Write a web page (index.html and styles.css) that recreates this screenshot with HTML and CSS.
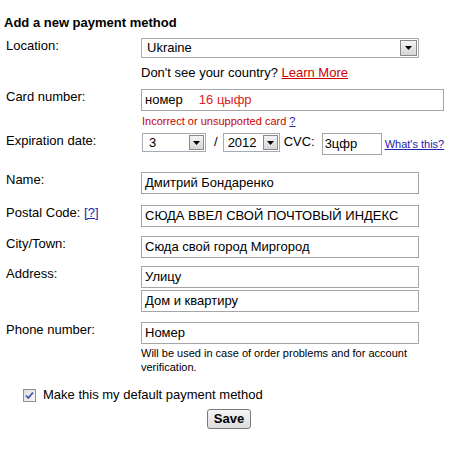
FILE: index.html
```html
<!DOCTYPE html>
<html>
<head>
<meta charset="utf-8">
<link rel="stylesheet" href="styles.css">
</head>
<body>
<div class="form">
  <h1 class="title">Add a new payment method</h1>

  <div class="row row-location">
    <div class="label">Location:</div>
    <div class="field">
      <div class="select select-country"><span class="select-value">Ukraine</span><span class="select-btn"><svg width="7" height="4" viewBox="0 0 7 4"><path d="M0 0H7L3.5 4Z" fill="#000"/></svg></span></div>
      <div class="country-hint">Don't see your country? <a class="link-red" href="#">Learn More</a></div>
    </div>
  </div>

  <div class="row row-card">
    <div class="label">Card number:</div>
    <div class="field">
      <div class="input input-card"><span>номер</span><span class="red-note">16 цыфр</span></div>
      <div class="error">Incorrect or unsupported card <a class="link-blue" href="#">?</a></div>
    </div>
  </div>

  <div class="row row-exp">
    <div class="label">Expiration date:</div>
    <div class="field exp-field">
      <div class="select select-month"><span class="select-value">3</span><span class="select-btn"><svg width="7" height="4" viewBox="0 0 7 4"><path d="M0 0H7L3.5 4Z" fill="#000"/></svg></span></div>
      <span class="slash">/</span>
      <div class="select select-year"><span class="select-value">2012</span><span class="select-btn"><svg width="7" height="4" viewBox="0 0 7 4"><path d="M0 0H7L3.5 4Z" fill="#000"/></svg></span></div>
      <span class="cvc-label">CVC:</span>
      <div class="input input-cvc">3цфр</div>
      <a class="link-blue whats" href="#">What's this?</a>
    </div>
  </div>

  <div class="row row-name">
    <div class="label">Name:</div>
    <div class="field"><div class="input">Дмитрий Бондаренко</div></div>
  </div>

  <div class="row row-postal">
    <div class="label">Postal Code: <a class="link-blue" href="#">[?]</a></div>
    <div class="field"><div class="input">СЮДА ВВЕЛ СВОЙ ПОЧТОВЫЙ ИНДЕКС</div></div>
  </div>

  <div class="row row-city">
    <div class="label">City/Town:</div>
    <div class="field"><div class="input">Сюда свой город Миргород</div></div>
  </div>

  <div class="row row-address">
    <div class="label">Address:</div>
    <div class="field address-field">
      <div class="input">Улицу</div>
      <div class="input">Дом и квартиру</div>
    </div>
  </div>

  <div class="row row-phone">
    <div class="label">Phone number:</div>
    <div class="field">
      <div class="input">Номер</div>
      <div class="phone-hint">Will be used in case of order problems and for account verification.</div>
    </div>
  </div>

  <div class="default-row">
    <span class="checkbox"><svg width="9" height="9" viewBox="0 0 9 9"><path d="M1 4.5L3.3 7L8 1.5" fill="none" stroke="#3e55a6" stroke-width="1.8"/></svg></span>
    <span>Make this my default payment method</span>
  </div>

  <div class="save-row">
    <button class="save-btn" type="button">Save</button>
  </div>
</div>
</body>
</html>
```

FILE: styles.css
```css
* { box-sizing: border-box; }

html, body {
  margin: 0;
  padding: 0;
  background: #fff;
}

body {
  font-family: "Liberation Sans", Arial, sans-serif;
  font-size: 13px;
  line-height: 16px;
  color: #000;
}

.form {
  width: 462px;
  padding-left: 6px;
}

.title {
  margin: 15px 0 0 -2px;
  font-size: 13px;
  line-height: 16px;
  font-weight: bold;
}

.row {
  display: flex;
  align-items: flex-start;
}

.label {
  width: 135px;
  flex: none;
}

.field {
  display: flex;
  flex-direction: column;
}

.row-location { margin-top: 7px; }
.row-card { margin-top: 8px; }
.row-exp { margin-top: 5px; }
.row-name { margin-top: 17px; }
.row-postal { margin-top: 11px; }
.row-city { margin-top: 9px; }
.row-address { margin-top: 8px; }
.row-phone { margin-top: 10px; }

.select {
  display: flex;
  align-items: center;
  background: #fff;
  border: 1px solid #a5acb5;
  height: 20px;
  padding: 1px;
}

.select-value {
  flex: 1;
  padding-left: 4px;
  white-space: nowrap;
}

.select-btn {
  width: 17px;
  height: 16px;
  flex: none;
  display: flex;
  align-items: center;
  justify-content: center;
  border: 1px solid #8a8a8a;
  background: linear-gradient(#f4f4f4, #d6d6d6);
}

.select-country { width: 278px; }

.country-hint {
  margin-top: 7px;
  line-height: 16px;
}

.link-red {
  color: #cc0000;
  text-decoration: underline;
}

.link-blue {
  color: #2222aa;
  text-decoration: underline;
}

.input {
  width: 278px;
  height: 22px;
  border: 1px solid #a5a5a5;
  padding: 0 3px;
  line-height: 20px;
  white-space: nowrap;
  background: #fff;
}

.input-card { width: 303px; }

.red-note {
  color: #dd2222;
  margin-left: 16px;
}

.error {
  margin-top: 3px;
  font-size: 11px;
  line-height: 14px;
  color: #cc0000;
  padding-left: 1px;
}

.exp-field {
  flex-direction: row;
  align-items: flex-start;
}

.select-month {
  width: 64px;
  height: 19px;
  margin-left: 1px;
}
.select-month .select-value { padding-left: 5px; }

.select-month .select-btn,
.select-year .select-btn { height: 15px; width: 15px; }

.slash {
  margin: 1px 5px 0 8px;
  line-height: 16px;
}

.select-year {
  width: 57px;
  height: 19px;
}
.select-year .select-value { padding-left: 3px; }

.cvc-label {
  margin-left: 4px;
  line-height: 18px;
  width: 38px;
}

.input-cvc {
  width: 60px;
  padding-left: 2px;
}

.whats {
  margin-left: 3px;
  font-size: 11px;
  line-height: 13px;
  margin-top: 5px;
  white-space: nowrap;
}

.address-field .input + .input { margin-top: 2px; }

.phone-hint {
  width: 278px;
  margin-top: 2px;
  font-size: 11px;
  line-height: 14px;
}

.default-row {
  display: flex;
  align-items: center;
  margin-top: 13px;
  padding-left: 17px;
}

.checkbox {
  width: 13px;
  height: 13px;
  border: 1px solid #8f8f8f;
  background: linear-gradient(135deg, #dcdcdc, #f8f8f8);
  display: flex;
  align-items: center;
  justify-content: center;
  margin-right: 7px;
}

.save-row {
  display: flex;
  justify-content: center;
  margin-top: 6px;
  padding-right: 10px;
}

.save-btn {
  font-family: "Liberation Sans", Arial, sans-serif;
  font-size: 13px;
  font-weight: bold;
  line-height: 16px;
  height: 20px;
  width: 44px;
  padding: 0;
  border: 1px solid #7a7a7a;
  border-radius: 3px;
  background: linear-gradient(#f6f6f6, #dcdcdc);
  color: #000;
}
```
